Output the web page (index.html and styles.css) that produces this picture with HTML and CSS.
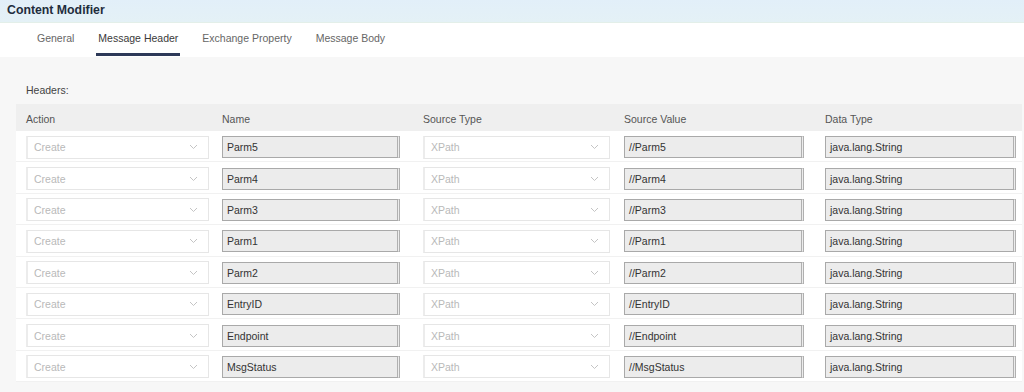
FILE: index.html
```html
<!DOCTYPE html>
<html lang="en">
<head>
<meta charset="utf-8">
<title>Content Modifier</title>
<link rel="stylesheet" href="styles.css">
</head>
<body>
<header class="title-bar"><h1 class="title">Content Modifier</h1></header>
<nav class="tabs">
  <a class="tab">General</a>
  <a class="tab active">Message Header</a>
  <a class="tab">Exchange Property</a>
  <a class="tab">Message Body</a>
</nav>
<main class="content">
  <div class="section-label">Headers:</div>
  <div class="table">
    <div class="row head">
      <div class="cell first">Action</div>
      <div class="cell">Name</div>
      <div class="cell">Source Type</div>
      <div class="cell">Source Value</div>
      <div class="cell">Data Type</div>
    </div>
    <div id="rows"></div>
  </div>
</main>
<script>
var names = ["Parm5","Parm4","Parm3","Parm1","Parm2","EntryID","Endpoint","MsgStatus"];
var chev = '<svg class="chev" width="9" height="6" viewBox="0 0 9 6"><path d="M1 1 L4.5 4.5 L8 1" fill="none" stroke="#c4c4c4" stroke-width="1"/></svg>';
var html = "";
names.forEach(function(n){
  html += '<div class="row">' +
    '<div class="cell first"><div class="select w-action"><span>Create</span>' + chev + '</div></div>' +
    '<div class="cell"><div class="field w-name">' + n + '</div></div>' +
    '<div class="cell"><div class="select w-stype"><span>XPath</span>' + chev + '</div></div>' +
    '<div class="cell"><div class="field w-sval">//' + n + '</div></div>' +
    '<div class="cell"><div class="field w-dtype">java.lang.String</div></div>' +
    '</div>';
});
document.getElementById("rows").innerHTML = html;
</script>
</body>
</html>
```
FILE: styles.css
```css
* { box-sizing: border-box; }
html, body { margin: 0; padding: 0; }
body {
  width: 1024px;
  height: 392px;
  overflow: hidden;
  background: #f7f7f7;
  font-family: "Liberation Sans", Arial, sans-serif;
  font-size: 10.5px;
  color: #333;
}
.title-bar {
  height: 23px;
  background: linear-gradient(#e2eff9, #e4f1f6);
  border-bottom: 1px solid #e3efe9;
  padding-left: 7px;
}
.title {
  margin: 0;
  font-size: 12.3px;
  font-weight: bold;
  line-height: 20px;
  color: #1f2d3d;
}
.tabs {
  height: 34px;
  background: #fff;
  display: flex;
  align-items: stretch;
  gap: 20px;
  padding-left: 35px;
}
.tab {
  display: flex;
  align-items: center;
  padding: 3px 2px 3px;
  color: #666;
  border-bottom: 3px solid transparent;
  height: 33px;
}
.tab.active {
  color: #3a3a3a;
  border-bottom-color: #2d3958;
}
.content {
  padding-top: 26px;
}
.section-label {
  padding-left: 26px;
  line-height: 14px;
  color: #444;
  margin-bottom: 7px;
}
.table {
  margin-left: 16px;
  width: 1006px;
  background: #fff;
}
.row {
  display: grid;
  grid-template-columns: 201px 201px 201px 201px 202px;
  align-items: center;
  height: 31.4px;
  border-bottom: 1px solid #f1f1f1;
}
.row.head {
  height: 27px;
  padding-top: 3px;
  background: #efefef;
  color: #555;
  border-bottom: none;
}
.cell { padding-left: 5px; }
.cell.first { padding-left: 10px; }
.select {
  height: 23px;
  margin-top: 2px;
  background: #fff;
  border: 1px solid #e6e6e6;
  border-left: 2px solid #ececec;
  display: flex;
  align-items: center;
  justify-content: space-between;
  padding: 0 10px 0 6px;
  color: #b9b9b9;
}
.field {
  height: 22px;
  margin-top: 2px;
  background: #ececec;
  border: 1px solid #a9a9a9;
  border-right: 3px double #b0b0b0;
  display: flex;
  align-items: center;
  padding-left: 4px;
  color: #333;
}
.w-action { width: 183px; }
.w-name { width: 178px; }
.w-stype { width: 187px; }
.w-sval { width: 180px; }
.w-dtype { width: 191px; }
```
